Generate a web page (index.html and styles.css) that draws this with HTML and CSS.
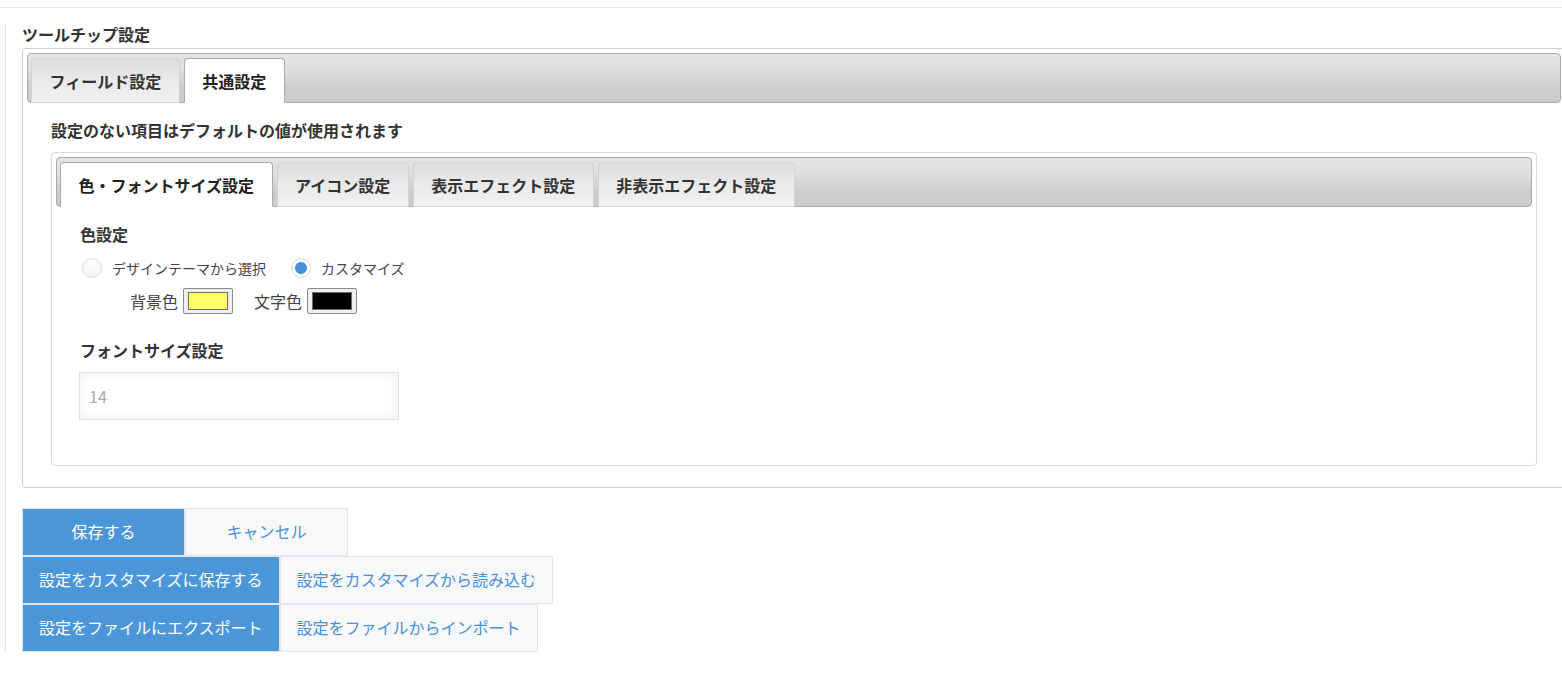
FILE: index.html
```html
<!DOCTYPE html>
<html lang="ja">
<head>
<meta charset="utf-8">
<title>ツールチップ設定</title>
<link rel="stylesheet" href="styles.css">
</head>
<body>
<div class="topbar"></div>
<div class="main">
  <div class="section-title">ツールチップ設定</div>
  <div class="tabs tabs-outer">
    <ul class="tab-nav">
      <li class="tab">フィールド設定</li>
      <li class="tab active">共通設定</li>
    </ul>
    <div class="outer-panel">
      <p class="note">設定のない項目はデフォルトの値が使用されます</p>
      <div class="tabs tabs-inner">
        <ul class="tab-nav">
          <li class="tab active">色・フォントサイズ設定</li>
          <li class="tab">アイコン設定</li>
          <li class="tab">表示エフェクト設定</li>
          <li class="tab">非表示エフェクト設定</li>
        </ul>
        <div class="inner-panel">
          <div class="field-title">色設定</div>
          <div class="radio-row">
            <label class="radio-item"><span class="radio"></span><span class="radio-label">デザインテーマから選択</span></label>
            <label class="radio-item"><span class="radio checked"></span><span class="radio-label">カスタマイズ</span></label>
          </div>
          <div class="color-row">
            <span class="color-label">背景色</span>
            <span class="swatch"><span class="swatch-fill fill-yellow"></span></span>
            <span class="color-label second">文字色</span>
            <span class="swatch"><span class="swatch-fill fill-black"></span></span>
          </div>
          <div class="field-title font-title">フォントサイズ設定</div>
          <input class="num-input" type="text" value="14">
        </div>
      </div>
    </div>
  </div>
  <div class="actions">
    <div class="btn-row">
      <button class="btn primary wide">保存する</button>
      <button class="btn secondary wide">キャンセル</button>
    </div>
    <div class="btn-row">
      <button class="btn primary">設定をカスタマイズに保存する</button>
      <button class="btn secondary">設定をカスタマイズから読み込む</button>
    </div>
    <div class="btn-row">
      <button class="btn primary">設定をファイルにエクスポート</button>
      <button class="btn secondary">設定をファイルからインポート</button>
    </div>
  </div>
</div>
</body>
</html>
```
FILE: styles.css
```css
html, body {
  margin: 0;
  padding: 0;
  overflow-x: hidden;
}
body {
  font-family: "Noto Sans CJK JP", "Noto Sans", sans-serif;
  color: #333;
  background: #fff;
  font-size: 16px;
  line-height: 24px;
}
.topbar {
  height: 7px;
  border-bottom: 1px solid #e6e6e6;
}
.main {
  margin: 16px 0 0 5px;
  border-left: 1px solid #e8e8e8;
  padding-left: 16px;
}
.section-title {
  font-weight: bold;
  font-size: 16px;
  line-height: 21px;
  padding-bottom: 1px;
  color: #333;
}
.tabs {
  border-radius: 4px;
  padding: 4px;
}
.tabs-outer {
  margin-top: 2px;
  margin-right: -4px;
  border: 1px solid #d0d0d0;
}
.tab-nav {
  list-style: none;
  margin: 0;
  padding: 4px 2px 0 3px;
  display: flex;
  gap: 4px;
  border: 1px solid #aaaaaa;
  border-radius: 4px;
  background: linear-gradient(to bottom, #e4e4e4 0%, #e0e0e0 30%, #cdcdcd 70%, #cbcbcb 100%);
}
.tab {
  box-sizing: border-box;
  height: 45px;
  margin-bottom: -1px;
  display: flex;
  align-items: center;
  padding: 0 17.5px;
  border: 1px solid #d3d3d3;
  border-radius: 4px 4px 0 0;
  background: linear-gradient(to bottom, #dcdcdc 0%, #e9e9e9 45%, #f1f1f1 100%);
  font-weight: bold;
  font-size: 16px;
  color: #333;
  white-space: nowrap;
}
.tab.active {
  background: #fff;
  border-color: #aaaaaa;
  border-bottom-color: #fff;
  color: #222;
}
.outer-panel {
  padding: 15px 24px 17px 24px;
}
.note {
  margin: 0;
  font-weight: bold;
  font-size: 16px;
  line-height: 24px;
  color: #333;
}
.tabs-inner {
  margin-top: 10px;
  border: 1px solid #dadada;
}
.inner-panel {
  padding: 15px 24px 41px 24px;
}
.field-title {
  font-weight: bold;
  font-size: 16px;
  line-height: 24px;
  color: #333;
}
.radio-row {
  margin-top: 12px;
  display: flex;
  align-items: center;
  height: 20px;
}
.radio-item {
  display: flex;
  align-items: center;
  gap: 10px;
  margin-left: 2px;
}
.radio-item + .radio-item {
  margin-left: 25px;
}
.radio {
  box-sizing: border-box;
  width: 20px;
  height: 20px;
  border-radius: 50%;
  border: 1px solid #dcdcdc;
  background: linear-gradient(to bottom, #ffffff, #f3f3f3);
  box-shadow: inset 0 1px 2px rgba(0, 0, 0, 0.04);
}
.radio.checked {
  background: radial-gradient(circle, #4a90d9 0, #4a90d9 5.5px, #ffffff 6.5px);
}
.radio-label {
  font-size: 14px;
  line-height: 20px;
  color: #444;
}
.color-row {
  margin-top: 10px;
  height: 26px;
  display: flex;
  align-items: center;
  padding-left: 50px;
}
.color-label {
  font-size: 16px;
  line-height: 26px;
  color: #444;
  margin-right: 5px;
}
.color-label.second {
  margin-left: 21px;
  margin-right: 5px;
}
.swatch {
  box-sizing: border-box;
  width: 50px;
  height: 26px;
  border: 1px solid #8a8a8a;
  border-radius: 2px;
  background: #efefef;
  padding: 3px 4px;
  display: flex;
}
.swatch-fill {
  flex: 1;
  border: 1px solid #6e6e6e;
}
.fill-yellow {
  background: #ffff66;
}
.fill-black {
  background: #000;
}
.font-title {
  margin-top: 24px;
}
.num-input {
  display: block;
  box-sizing: border-box;
  margin-top: 10px;
  margin-left: -1px;
  width: 320px;
  height: 48px;
  border: 1px solid #e2e2e2;
  border-radius: 0;
  padding: 0 9px;
  font-family: "Noto Sans CJK JP", "Noto Sans", sans-serif;
  font-size: 16px;
  color: #aaaaaa;
  background: #fff;
  box-shadow: inset 0 0 12px rgba(0, 0, 0, 0.07);
  outline: none;
}
.actions {
  margin-top: 20px;
  display: flex;
  flex-direction: column;
}
.btn-row {
  display: flex;
}
.btn {
  box-sizing: border-box;
  height: 48px;
  padding: 0 16px;
  border: 1px solid #e3e5e9;
  border-radius: 0;
  font-family: "Noto Sans CJK JP", "Noto Sans", sans-serif;
  font-size: 16px;
  line-height: 22px;
  padding-bottom: 2px;
  white-space: nowrap;
  cursor: pointer;
}
.btn.wide {
  min-width: 163px;
}
.btn.primary {
  background: #4b96d9;
  color: #fff;
}
.btn.secondary {
  background: #f7f8fa;
  color: #4a90d9;
}
```
